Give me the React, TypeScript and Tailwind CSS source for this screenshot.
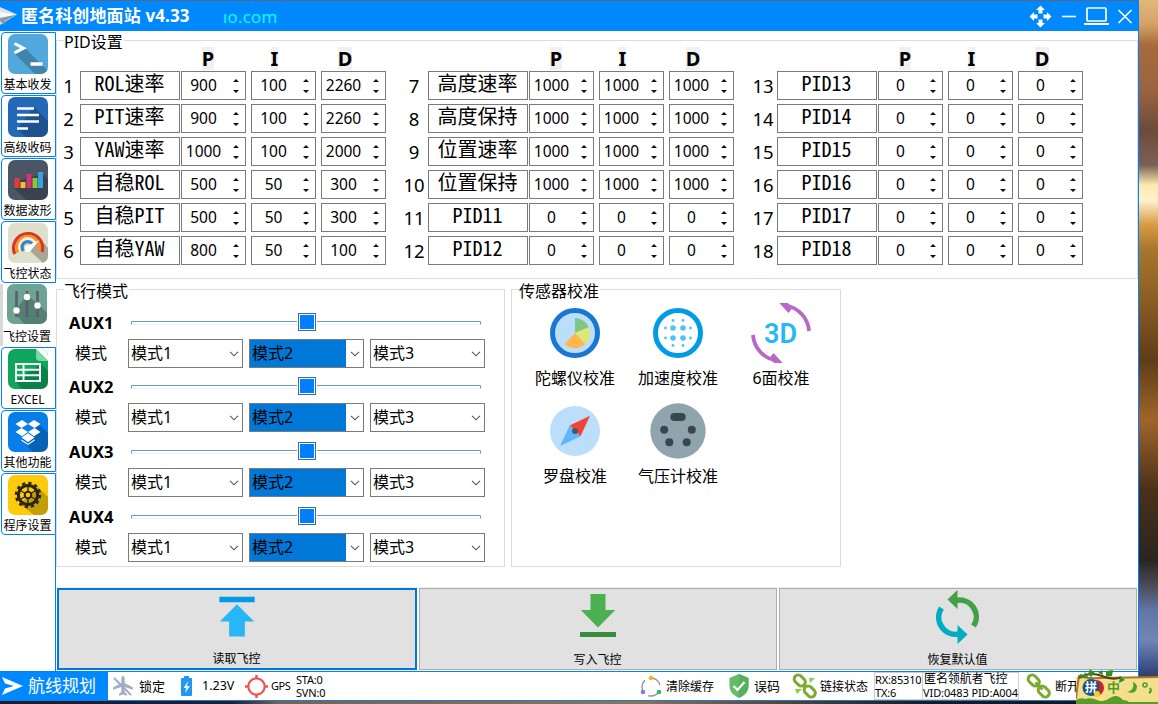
import React from "react";

const UI = "font-['Noto_Sans','Noto_Sans_CJK_SC',sans-serif]";

type Row = [string, number, number, number];

const groups: { first: number; numClass: string; rows: Row[] }[] = [
  {
    first: 1,
    numClass: "w-[23px]",
    rows: [
      ["ROL速率", 900, 100, 2260],
      ["PIT速率", 900, 100, 2260],
      ["YAW速率", 1000, 100, 2000],
      ["自稳ROL", 500, 50, 300],
      ["自稳PIT", 500, 50, 300],
      ["自稳YAW", 800, 50, 100],
    ],
  },
  {
    first: 7,
    numClass: "ml-[14px] w-[28px]",
    rows: [
      ["高度速率", 1000, 1000, 1000],
      ["高度保持", 1000, 1000, 1000],
      ["位置速率", 1000, 1000, 1000],
      ["位置保持", 1000, 1000, 1000],
      ["PID11", 0, 0, 0],
      ["PID12", 0, 0, 0],
    ],
  },
  {
    first: 13,
    numClass: "ml-[15px] w-[28px]",
    rows: [
      ["PID13", 0, 0, 0],
      ["PID14", 0, 0, 0],
      ["PID15", 0, 0, 0],
      ["PID16", 0, 0, 0],
      ["PID17", 0, 0, 0],
      ["PID18", 0, 0, 0],
    ],
  },
];

function Spin({ value }: { value: number }) {
  return (
    <div className="flex h-[29px] w-[65px] items-center border border-[#7a7a7a] bg-white">
      <span className="w-[43px] text-center text-[15.5px] leading-[27px]">{value}</span>
      <svg width="8" height="16" viewBox="0 0 8 16" className="ml-[7px]">
        <path d="M1 4h6L4 1zM1 12h6L4 15z" fill="#111" />
      </svg>
    </div>
  );
}

function Head({ text, pad }: { text: string; pad: string }) {
  return (
    <div className={`flex w-[65px] justify-center ${pad}`}>
      <span className="h-[23px] bg-[#f0f0f0] text-[20px] leading-[24px] font-bold">{text}</span>
    </div>
  );
}

function PidGroup({ group }: { group: (typeof groups)[number] }) {
  return (
    <div className="flex flex-col">
      <div className="flex h-6">
        <div className={group.numClass} />
        <div className="w-[101px]" />
        <div className="flex gap-[5px]">
          <Head text="P" pad="pr-[11px]" />
          <Head text="I" pad="pr-[18px]" />
          <Head text="D" pad="pr-[17px]" />
        </div>
      </div>
      <div className="flex flex-col gap-1">
        {group.rows.map(([name, p, i, d], n) => (
          <div key={name} className="flex h-[29px]">
            <div className={`text-center text-[18.5px] leading-[29px] ${group.numClass}`}>{group.first + n}</div>
            <div className="mr-px w-[100px] border border-[#7a7a7a] pr-px text-center font-['Noto_Sans_CJK_SC',sans-serif] text-[20px] leading-[22px] whitespace-nowrap [font-feature-settings:'hwid']">
              {name}
            </div>
            <div className="flex gap-[5px]">
              <Spin value={p} />
              <Spin value={i} />
              <Spin value={d} />
            </div>
          </div>
        ))}
      </div>
    </div>
  );
}

function Legend({ text }: { text: string }) {
  return <span className="absolute -top-[9px] left-[7px] h-5 bg-white pr-px text-[16px] leading-[20px] whitespace-nowrap">{text}</span>;
}

function Combo({ text, active = false }: { text: string; active?: boolean }) {
  return (
    <div className="flex h-[29px] w-[115px] items-center border border-[#7a7a7a] bg-white">
      <span className={`h-[27px] w-[96px] pl-[2px] text-[16px] leading-[27px] ${active ? "bg-[#0078d7]" : ""}`}>{text}</span>
      <svg width="10" height="6" viewBox="0 0 10 6" className="ml-[4px]">
        <path d="M1 .8l4 4 4-4" fill="none" stroke="#555" strokeWidth="1.1" />
      </svg>
    </div>
  );
}

function AuxRow({ n, tall }: { n: number; tall: boolean }) {
  return (
    <div className={tall ? "h-[65px]" : "h-[64px]"}>
      <div className="flex h-[30px] items-start pt-[4px]">
        <span className="w-[62px] text-[16.5px] leading-[20px] font-bold">AUX{n}</span>
        <svg width="351" height="20" viewBox="0 0 351 20">
          <path d="M0 11.5h166M184 11.5H350" stroke="#edf0f4" />
          <path d="M.5 11.500v-3H166M186 8.500H349.500v3" fill="none" stroke="#6c97cc" />
          <rect x="167.500" y=".5" width="17" height="17" fill="#fff" stroke="#2c6fb5" />
          <rect x="169" y="2" width="14" height="14" fill="#0080ff" />
          <path d="M176.500 6v7" stroke="#2071c4" />
        </svg>
      </div>
      <div className="flex gap-[6px]">
        <span className="w-[53px] pl-[6px] text-[16px] leading-[28px]">模式</span>
        <Combo text="模式1" />
        <Combo text="模式2" active />
        <Combo text="模式3" />
      </div>
    </div>
  );
}

const calibrations: { label: string; icon: React.ReactNode }[] = [
  {
    label: "陀螺仪校准",
    icon: (
      <svg width="50" height="50" viewBox="0 0 50 50">
        <circle cx="25" cy="25" r="22.500" fill="#bbdefb" stroke="#1976d2" strokeWidth="5" />
        <path d="M25 25V10a15 15 0 0 1 13.800 9.200z" fill="#81c784" />
        <path d="M25 25l13.800-5.800A15 15 0 0 1 35.300 36z" fill="#dce775" />
        <path d="M25 25l10.300 11a15 15 0 0 1-20.700 0z" fill="#ffb74d" />
      </svg>
    ),
  },
  {
    label: "加速度校准",
    icon: (
      <svg width="50" height="50" viewBox="0 0 50 50">
        <circle cx="25" cy="25" r="22.500" fill="#fff" stroke="#039be5" strokeWidth="5" />
        <g fill="#4fc3f7">
          {[[20, 20], [30, 20], [20, 30], [30, 30]].map(([x, y]) => (
            <circle key={`${x}-${y}`} cx={x} cy={y} r="2.800" />
          ))}
          {[[20, 12.5], [30, 12.5], [20, 37.5], [30, 37.5], [12.5, 20], [37.5, 20], [12.5, 30], [37.5, 30]].map(([x, y]) => (
            <circle key={`${x}-${y}`} cx={x} cy={y} r="1.400" />
          ))}
        </g>
      </svg>
    ),
  },
  {
    label: "6面校准",
    icon: (
      <svg width="60" height="60" viewBox="0 0 60 60">
        <g id="arc">
          <path d="M35 2.500A28 28 0 0 1 58 28" fill="none" stroke="#ba68c8" strokeWidth="3.800" />
          <path d="M28.300 0h8.500l4.700 5-4 5z" fill="#ba68c8" />
        </g>
        <use href="#arc" transform="rotate(180 30 30)" />
        <text x="29.500" y="40" textAnchor="middle" fill="#29b6f6" className="font-['Roboto',sans-serif] text-[27px] font-semibold">3D</text>
      </svg>
    ),
  },
  {
    label: "罗盘校准",
    icon: (
      <svg width="50" height="50" viewBox="0 0 50 50">
        <circle cx="25" cy="25" r="25" fill="#bbdefb" />
        <path d="M40 9.700L19.700 19.500 30.500 30.300z" fill="#f44336" />
        <path d="M10 40l9.700-20.500 10.800 10.800z" fill="#64b5f6" />
        <circle cx="25" cy="25" r="3" fill="#455a64" />
      </svg>
    ),
  },
  {
    label: "气压计校准",
    icon: (
      <svg width="56" height="56" viewBox="0 0 56 56">
        <circle cx="28" cy="28" r="27.700" fill="#90a4ae" />
        <g fill="#37474f">
          <rect x="20.300" y="10" width="15.400" height="8" rx="4" />
          <circle cx="14.200" cy="26.700" r="4" />
          <circle cx="41.800" cy="26.700" r="4" />
          <circle cx="19.300" cy="39.300" r="4" />
          <circle cx="36.700" cy="39.300" r="4" />
        </g>
      </svg>
    ),
  },
];

function Tile({ bg, shade, children }: { bg: string; shade: string; children: React.ReactNode }) {
  return (
    <svg width="40" height="40" viewBox="0 0 40 40" className="shrink-0 overflow-hidden rounded-[7px]">
      <rect width="40" height="40" fill={bg} />
      {shade && <path d={shade} fill="#000" opacity=".22" />}
      {children}
    </svg>
  );
}

const tabs: { label: string; icon: React.ReactNode }[] = [
  {
    label: "基本收发",
    icon: (
      <Tile bg="#52a8db" shade="M6 19L17 14 40 37V40H27z">
        <path d="M6.500 9.500l9 4.700-9 4.700" fill="none" stroke="#fff" strokeWidth="3" />
        <path d="M22.500 30h12" stroke="#fff" strokeWidth="3.600" />
      </Tile>
    ),
  },
  {
    label: "高级收码",
    icon: (
      <Tile bg="#2369b8" shade="M26 10L40 24V40H18L9 32z">
        <path d="M9 11.500h17M9 18h22M9 24.500h22M9 31.500h11" stroke="#fff" strokeWidth="2.400" />
      </Tile>
    ),
  },
  {
    label: "数据波形",
    icon: (
      <Tile bg="#4b5566" shade="M6 28l7-8 22-6 5 5v21H18z">
        <path d="M6.500 18h5v10h-5z" fill="#e53a3c" />
        <path d="M12.500 22h5v6h-5z" fill="#efc12f" />
        <path d="M18.500 14h5v14h-5z" fill="#d9336f" />
        <path d="M24.500 18h5v10h-5z" fill="#8cc63e" />
        <path d="M30 12h5v16h-5z" fill="#35a3dc" />
      </Tile>
    ),
  },
  {
    label: "飞控状态",
    icon: (
      <Tile bg="#dfe0cb" shade="">
        <path d="M20 26l13-9 7 8v15h-5z" fill="#a7a795" />
        <g fill="none" strokeWidth="3.300">
          <path d="M6.800 31A14.500 14.500 0 1 1 34 29" stroke="#d8372a" />
          <path d="M9.900 29.500A11.300 11.300 0 1 1 31 28" stroke="#f39225" />
          <path d="M13 28.500A8.200 8.200 0 1 1 27 20" stroke="#f7ecd0" />
          <path d="M15.500 28A5.500 5.500 0 0 1 24 20.500" stroke="#3686c6" />
        </g>
        <path d="M31.500 17L22 28.500 17.500 24z" fill="#fff" />
        <circle cx="20" cy="26" r="3" fill="#fff" />
      </Tile>
    ),
  },
  {
    label: "飞控设置",
    icon: (
      <Tile bg="#6fa391" shade="M7 28l13-17 12 10 8 8v11H17z">
        <path d="M9.500 7v26M20 7v26M30.500 7v26" stroke="#526079" strokeWidth="2.600" />
        <g fill="#fff">
          <circle cx="9.500" cy="26.500" r="3.200" />
          <circle cx="20" cy="13" r="3.200" />
          <circle cx="30.500" cy="21.500" r="3.200" />
        </g>
      </Tile>
    ),
  },
  {
    label: "EXCEL",
    icon: (
      <Tile bg="#0fa55c" shade="M33 15l7 7v18H14L7 32z">
        <path d="M28 0h12v12z" fill="#fff" />
        <path d="M28 0v8q0 4 4 4h8z" fill="#79d89f" />
        <path d="M8 15h24v17H8zM8 20.700h24M8 26.300h24M15.500 15v17" fill="none" stroke="#f4fff9" strokeWidth="2" />
      </Tile>
    ),
  },
  {
    label: "其他功能",
    icon: (
      <Tile bg="#087ee8" shade="M32 13l8 8v19H25L13 27z">
        <path d="M14 8l6 4-6.500 4L7.500 12zM26 8l6.500 4-6 4L20 12zM7.500 20l6-4 6.500 4-6 4.300zM26.500 16l6 4-6.500 4.300L20 20zM13.500 25.500l6.500-4.300 6.500 4.300-6.500 4.800zM13.500 27.300l6.500 4.500 6.500-4.500v1.500L20 33l-6.500-4.200z" fill="#fff" />
      </Tile>
    ),
  },
  {
    label: "程序设置",
    icon: (
      <Tile bg="#fccb0c" shade="M30 12l10 10v18H26L12 29z">
        <g stroke="#2a2414">
          <circle cx="20" cy="20" r="9.600" fill="none" strokeWidth="3" />
          <circle cx="20" cy="20" r="12" fill="none" strokeWidth="2.400" strokeDasharray="3.142 3.142" />
          <path d="M20 10v20M11.300 15l17.400 10M11.300 25l17.400-10" strokeWidth="1.400" />
          <circle cx="20" cy="20" r="3.300" fill="#fccb0c" strokeWidth="2" />
        </g>
      </Tile>
    ),
  },
];

function Sidebar() {
  return (
    <div className="flex w-[56px] shrink-0 flex-col pt-px">
      <div className="flex flex-col gap-px">
        {tabs.map(({ label, icon }, i) => {
          const on = i === 4;
          return (
            <div
              key={label}
              className={
                on
                  ? "flex h-[62px] flex-col items-center border-l-[3px] border-[#d9d9d9] pr-[5px]"
                  : "ml-px flex h-[62px] flex-col items-center rounded-l-[4px] border border-[#0080ff] pt-px pr-[2px]"
              }
            >
              {icon}
              <span className={`text-[12px] leading-[18px] whitespace-nowrap ${on ? "mt-[4px]" : "mt-[2px]"}`}>{label}</span>
            </div>
          );
        })}
      </div>
      <div className="flex-1 border-r border-[#0080ff]" />
    </div>
  );
}

function ActionButton({ label, primary = false, children }: { label: string; primary?: boolean; children: React.ReactNode }) {
  return (
    <button
      className={`flex h-[82px] flex-col items-center bg-[#e1e1e1] pr-px text-[12px] leading-[18px] ${
        primary ? "w-[360px] border-2 border-[#0078d7]" : "w-[358px] border border-[#adadad] pt-px"
      }`}
    >
      <svg width="48" height="54" viewBox="0 0 48 54">{children}</svg>
      <span className="mt-[7px]">{label}</span>
    </button>
  );
}

function ChainIcon({ broken = false }: { broken?: boolean }) {
  return (
    <svg width="26" height="26" viewBox="0 0 26 26">
      <g fill="none" stroke="#7daa2d" strokeWidth="3">
        <rect x="1.500" y="3.500" width="12.500" height="8" rx="4" transform="rotate(45 7.750 7.500)" />
        <rect x="11.500" y="14.500" width="12.500" height="8" rx="4" transform="rotate(45 17.750 18.500)" />
        {!broken && <path d="M9.500 9.500l7 7" />}
      </g>
      {broken && <path d="M17 5h6l-5 5zM3 16h7l-5 5z" fill="#8bcf4b" />}
    </svg>
  );
}

function StatusBar() {
  return (
    <div className="flex h-[28px] shrink-0 items-center overflow-hidden bg-white whitespace-nowrap">
      <div className="flex h-full w-[108px] items-center bg-[#0088ff] text-white">
        <svg width="24" height="20" viewBox="0 0 24 20" className="ml-px">
          <path d="M1 1l21 9L1 19l3-6.500 9-2.500-9-2.500z" fill="#fff" />
        </svg>
        <span className="ml-[3px] text-[17px] leading-[28px]">航线规划</span>
      </div>
      <svg width="22" height="22" viewBox="0 0 22 22" className="ml-[4px]">
        <path d="M11 1c1.200 0 1.700 1.200 1.700 2.500V8l8.300 4.500v2.300L12.700 12v5l2.300 2v1.700l-4-1.200-4 1.200V19l2.300-2v-5L1 14.800v-2.300L9.300 8V3.500C9.300 2.200 9.800 1 11 1z" fill="#a3b1bc" />
        <path d="M2 3l17 17" stroke="#9fa8da" strokeWidth="2" />
      </svg>
      <span className="ml-[5px] w-[42px] pt-px text-[13px]">锁定</span>
      <svg width="12" height="22" viewBox="0 0 12 22">
        <path d="M3 1h5v2h2a1 1 0 0 1 1 1v16a1 1 0 0 1-1 1H1a1 1 0 0 1-1-1V4a1 1 0 0 1 1-1h2z" fill="#2196f3" />
        <path d="M7 6l-4.500 7H5l-.7 5L9 11H6z" fill="#e3f6ff" />
      </svg>
      <span className="ml-[9px] w-[43px] pt-px text-[12.500px]">1.23V</span>
      <svg width="23" height="23" viewBox="0 0 23 23">
        <circle cx="11.500" cy="11.500" r="8.200" fill="none" stroke="#ef5350" strokeWidth="2.200" />
        <path d="M11.500 0v4M11.500 19v4M0 11.500h4M19 11.500h4" stroke="#ef5350" strokeWidth="2.400" />
      </svg>
      <span className="ml-[3px] w-[25px] pt-px text-[11px] tracking-[-0.500px]">GPS</span>
      <div className="w-[342px] text-[11px] leading-[13px] tracking-[-0.200px]">
        <div>STA:0</div>
        <div>SVN:0</div>
      </div>
      <svg width="22" height="22" viewBox="0 0 22 22" className="ml-[2px]">
        <circle cx="11" cy="12" r="9" fill="none" stroke="#8b95a5" strokeWidth="1.300" strokeDasharray="13 5.800" strokeDashoffset="-4" />
        <circle cx="11" cy="3" r="2.300" fill="#f5b81c" />
        <circle cx="3" cy="17" r="2.300" fill="#7c83c9" />
        <circle cx="19" cy="17" r="2.300" fill="#3bb273" />
      </svg>
      <span className="ml-[4px] w-[62px] pt-px text-[12px]">清除缓存</span>
      <svg width="22" height="24" viewBox="0 0 22 24">
        <path d="M11 0l9.500 4v8c0 5.500-4 9.500-9.500 12C5.500 21.500 1.500 17.500 1.500 12V4z" fill="#66bb6a" />
        <path d="M11 0l9.500 4v8c0 5.500-4 9.500-9.500 12z" fill="#57b05d" />
        <path d="M5.500 12l4 4 7-8" fill="none" stroke="#fff" strokeWidth="2.200" />
      </svg>
      <span className="ml-[4px] w-[38px] pt-px text-[13px]">误码</span>
      <ChainIcon broken />
      <span className="ml-[2px] w-[54px] pt-px text-[12px]">链接状态</span>
      <div className="h-[28px] w-[49px] border border-[#cfcfcf] text-[11px] leading-[13px] tracking-[-0.150px]">
        <div>RX:85310</div>
        <div>TX:6</div>
      </div>
      <div className="h-[28px] w-[96px] border border-l-0 border-[#cfcfcf] text-[11px] tracking-[-0.100px]">
        <div className="h-[13px] pl-px text-[12px] leading-[11px]">匿名领航者飞控</div>
        <div className="leading-[14px]">VID:0483 PID:A004</div>
      </div>
      <div className="ml-[7px]">
        <ChainIcon />
      </div>
      <span className="ml-[3px] pt-px text-[12px]">断开</span>
    </div>
  );
}

function TitleBar() {
  return (
    <div className="flex h-[30px] shrink-0 items-center bg-[#0088ff] text-white">
      <svg width="18" height="22" viewBox="0 0 18 22">
        <path d="M0 2l17 7.500L0 20z" fill="#dce3e8" />
        <path d="M0 9l17 .5L5 16l-1 4-4-4z" fill="#8799a8" />
        <path d="M0 7l17 2.500L0 13z" fill="#f7fafc" />
      </svg>
      <span className="ml-[3px] text-[17px] leading-[28px] font-bold tracking-[0.120px] whitespace-nowrap">匿名科创地面站 v4.33</span>
      <span className="ml-auto w-[806px] text-[17px] leading-[29px] tracking-[0.150px] text-[#00ffff]">ıo.com</span>
      <svg width="110" height="26" viewBox="0 0 110 26" className="-mr-px" fill="none" stroke="#fff">
        <g fill="#fff" stroke="none">
          <path id="arrow" d="M11.500 2.500l4.500 4.500h-2.500v3.500h-4V7H7z" />
          <use href="#arrow" transform="rotate(90 11.500 13.500)" />
          <use href="#arrow" transform="rotate(180 11.500 13.500)" />
          <use href="#arrow" transform="rotate(270 11.500 13.500)" />
        </g>
        <path d="M33 13.500h14" strokeWidth="1.600" />
        <rect x="58" y="5" width="19" height="13" rx="1" strokeWidth="1.700" />
        <path d="M55 21h25" strokeWidth="2" />
        <path d="M89.500 7l13 13M102.500 7l-13 13" strokeWidth="1.600" />
      </svg>
    </div>
  );
}

function ImeBar() {
  return (
    <div className="absolute right-0 bottom-0 flex h-[36px] w-[82px] items-end">
      <div className="relative flex h-[27px] w-full bg-[#f4df8d]">
        <svg width="82" height="36" viewBox="0 0 82 36" className="absolute bottom-0 left-0">
          <path d="M0 31Q1 20 3 8q10 3 20 2l59-1" fill="none" stroke="#a8762a" strokeWidth="2" />
          <path d="M3 10Q14 3 26 8T45 9" fill="none" stroke="#5c3e15" strokeWidth="2" />
          <path d="M14 1l5 4-4 4-3-3zM30 3l7-1-1 6-6 1zM4 6l5 1-4 4zM22 5l4-3 1 5zM44 8l5 4-6 3zM9 4l3 5-5 1z" fill="#3b8b25" />
          <path d="M0 32q5-3 9-1 6-2 12 1t13-2 13 2q4 0 6 2H82v2H0z" fill="#579b29" />
          <circle cx="20" cy="20" r="8" fill="#c62828" />
          <circle cx="15" cy="19.500" r="8.500" fill="#17558d" />
          <circle cx="21" cy="26" r="3" fill="#ffca28" />
          <path d="M57 14q2 8-6 10 9 3 10-5 0-3-4-5z" fill="#4e9f28" />
          <circle cx="69" cy="17" r="2" fill="none" stroke="#4e9f28" strokeWidth="1.600" />
          <path d="M74 20q2 3-1 5" fill="none" stroke="#4e9f28" strokeWidth="2.200" />
        </svg>
        <span className="relative ml-[9px] text-[12px] leading-[21px] font-bold text-white">拼</span>
        <span className="relative ml-[10px] text-[13px] leading-[21px] font-bold text-[#4e9f28]">中</span>
      </div>
    </div>
  );
}

export default function App() {
  return (
    <div className={`relative h-[704px] w-[1158px] overflow-hidden bg-[linear-gradient(90deg,#1a1c2e_0,#231d2a_20%,#7d6047_24%,#92714f_55%,#21190f_80%,#141414)] text-black ${UI}`}>
      <div className="flex h-full">
        <div className="flex h-[701px] w-[1139px] flex-col border-t border-r border-b border-t-[#5d6680] border-r-[#0080ff] border-b-[#0080ff] bg-white">
          <TitleBar />
          <div className="flex h-[640px]">
            <Sidebar />
            <div className="flex flex-1 flex-col">
              <section className="relative mt-[9px] flex h-[239px] border border-[#dcdcdc] pt-[6px]">
                <Legend text="PID设置" />
                {groups.map((g) => (
                  <PidGroup key={g.first} group={g} />
                ))}
              </section>
              <div className="mt-[10px] flex gap-[6px]">
                <section className="relative h-[278px] w-[449px] border border-[#dcdcdc] pt-[19px] pl-[12px]">
                  <Legend text="飞行模式" />
                  {[1, 2, 3, 4].map((n) => (
                    <AuxRow key={n} n={n} tall={n > 1} />
                  ))}
                </section>
                <section className="relative h-[278px] w-[330px] border border-[#dcdcdc] pt-[13px] pl-[11px]">
                  <Legend text="传感器校准" />
                  <div className="grid w-[309px] grid-cols-3 gap-y-3">
                    {calibrations.map((c) => (
                      <div key={c.label} className="flex flex-col items-center gap-[5px]">
                        <div className="flex h-[60px] items-center">{c.icon}</div>
                        <span className="mb-px pl-px text-[16px] leading-[20px] whitespace-nowrap">{c.label}</span>
                      </div>
                    ))}
                  </div>
                </section>
              </div>
              <div className="mt-[20px] flex gap-[2px] border-t border-[#eeeeee] pl-px">
                <ActionButton label="读取飞控" primary>
                  <path d="M6 7h36v5.500H6z" fill="#039be5" />
                  <path d="M24 14.500L41.500 32H32v15.500H16V32H6.500z" fill="#29b6f6" />
                </ActionButton>
                <ActionButton label="写入飞控">
                  <path d="M16.500 4h15v16h9.700L24 37.500 6.800 20h9.700z" fill="#4caf50" />
                  <path d="M6 42h36v5H6z" fill="#388e3c" />
                </ActionButton>
                <ActionButton label="恢复默认值">
                  <path d="M22 10.500A16.700 16.700 0 0 1 39.500 36" fill="none" stroke="#43a047" strokeWidth="5.500" />
                  <path d="M13.500 9.500L23.500 0v19z" fill="#43a047" />
                  <path d="M7.500 18A17 17 0 0 0 25 44" fill="none" stroke="#00acc1" strokeWidth="5.500" />
                  <path d="M33.500 44.500L23.500 35v19z" fill="#00acc1" />
                </ActionButton>
              </div>
            </div>
          </div>
          <div className="h-px shrink-0 bg-[#0080ff]" />
          <StatusBar />
        </div>
        <div className="w-[19px] bg-[linear-gradient(180deg,#e2b878_0,#d3a066_25px,#a86a3c_45px,#9a6440_90px,#6d4a3c_130px,#7c6152_165px,#ffe9ae_185px,#fff2cd_200px,#d89a42_225px,#a5762c_250px,#8b5d23_300px,#5f3c18_360px,#a0642b_420px,#4a3019_490px,#2b2521_560px,#4b4a55_585px,#6275a4_610px,#7286b4_640px,#3f558b_665px,#1b2136_690px)]" />
      </div>
      <ImeBar />
    </div>
  );
}
